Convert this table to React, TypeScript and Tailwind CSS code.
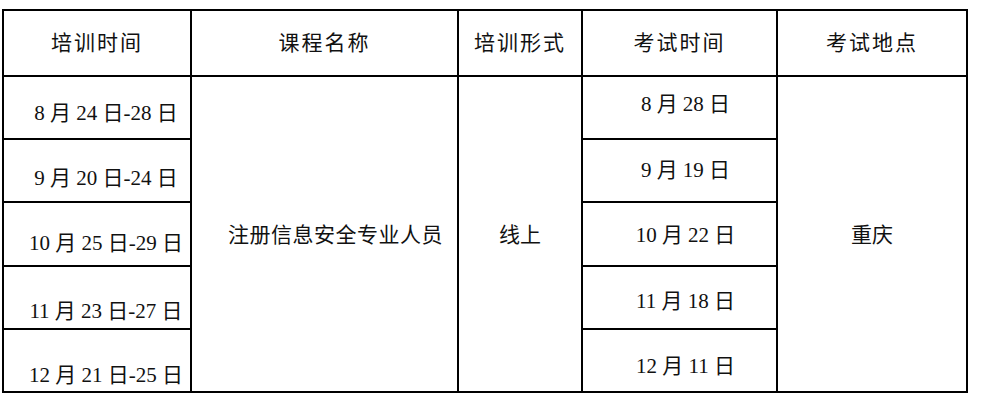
import React from "react";

const trainDates = [
  { text: "8 月 24 日-28 日", pad: "pt-[24px]" },
  { text: "9 月 20 日-24 日", pad: "pt-[26px]" },
  { text: "10 月 25 日-29 日", pad: "pt-[28px]" },
  { text: "11 月 23 日-27 日", pad: "pt-[32px]" },
  { text: "12 月 21 日-25 日", pad: "pt-[33px]" },
];

const examDates = [
  { text: "8 月 28 日", pad: "pt-[15px]" },
  { text: "9 月 19 日", pad: "pt-[18px]" },
  { text: "10 月 22 日", pad: "pt-[20px]" },
  { text: "11 月 18 日", pad: "pt-[22px]" },
  { text: "12 月 11 日", pad: "pt-[24px]" },
];

const rowStart = ["row-start-2", "row-start-3", "row-start-4", "row-start-5", "row-start-6"];

export default function App() {
  const font = "font-['Liberation_Serif','Noto_Sans_CJK_SC',serif]";
  const head = "bg-white flex items-center justify-center tracking-[2px] row-start-1";

  return (
    <div className={`w-[988px] h-[403px] bg-white text-[#111] text-[21px] leading-[24px] pt-[9px] pl-[2px] ${font}`}>
      <div className="w-[966px] bg-black p-[2px] grid gap-[2px] grid-cols-[186px_265px_122px_193px_188px] grid-rows-[64px_61px_61px_62px_61px_61px]">
        {/* header */}
        <div className={`${head} col-start-1`}>培训时间</div>
        <div className={`${head} col-start-2`}>课程名称</div>
        <div className={`${head} col-start-3`}>培训形式</div>
        <div className={`${head} col-start-4`}>考试时间</div>
        <div className={`${head} col-start-5`}>考试地点</div>

        {trainDates.map((d, i) => (
          <div key={d.text} className={`bg-white col-start-1 ${rowStart[i]} flex justify-center pl-[18px] ${d.pad}`}>
            <span className="whitespace-pre">{d.text}</span>
          </div>
        ))}

        <div className="bg-white col-start-2 row-start-2 row-span-5 flex items-center justify-center pl-[22px] tracking-[0.5px] pt-[2px]">
          注册信息安全专业人员
        </div>
        <div className="bg-white col-start-3 row-start-2 row-span-5 flex items-center justify-center pt-[2px]">
          线上
        </div>

        {examDates.map((d, i) => (
          <div key={d.text} className={`bg-white col-start-4 ${rowStart[i]} flex justify-center pl-[12px] ${d.pad}`}>
            <span className="whitespace-pre">{d.text}</span>
          </div>
        ))}

        <div className="bg-white col-start-5 row-start-2 row-span-5 flex items-center justify-center pt-[2px]">
          重庆
        </div>
      </div>
    </div>
  );
}
